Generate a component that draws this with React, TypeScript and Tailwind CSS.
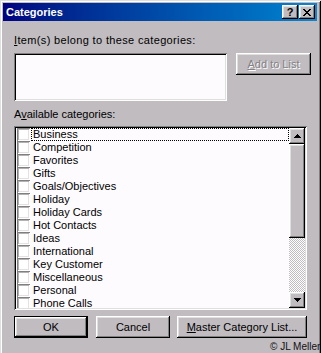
import React from 'react';

const categories = [
  'Business',
  'Competition',
  'Favorites',
  'Gifts',
  'Goals/Objectives',
  'Holiday',
  'Holiday Cards',
  'Hot Contacts',
  'Ideas',
  'International',
  'Key Customer',
  'Miscellaneous',
  'Personal',
  'Phone Calls',
];

const styles = {
  raised: 'shadow-[inset_-1px_-1px_#000,inset_1px_1px_#fff,inset_-2px_-2px_#808080,inset_2px_2px_#dfdfdf]',
  sunken: 'shadow-[inset_1px_1px_#808080,inset_-1px_-1px_#fff,inset_2px_2px_#000,inset_-2px_-2px_#dfdfdf]',
  check: 'shadow-[inset_1px_1px_#808080,inset_-1px_-1px_#fff,inset_2px_2px_#b4b0b4,inset_-2px_-2px_#e4e0e4]',
  button: 'flex h-[22px] items-center justify-center bg-[#c0bcc0] text-[11px]',
};

function Arrow({ down }: { down?: boolean }) {
  return (
    <svg width="7" height="4" viewBox="0 0 7 4" className={down ? 'rotate-180' : ''}>
      <path d="M3 0h1v1h1v1h1v1h1v1H0V3h1V2h1V1h1z" fill="#000" />
    </svg>
  );
}

function App() {
  return (
    <div className="relative h-[353px] w-[321px] overflow-hidden bg-[#c0bcc0] font-['Liberation_Sans',Arial,sans-serif]">
      <div className="h-[360px] w-[321px] pl-[3px] pr-[4px] pt-[3px] shadow-[inset_1px_1px_#dfdfdf,inset_-1px_-1px_#000,inset_2px_2px_#fff,inset_-2px_-2px_#808080]">
        {/* title bar */}
        <div className="flex h-[18px] items-center bg-linear-to-r from-[#000080] to-[#1084d0] pl-[3px] pr-[2px]">
          <span className="text-[11px] font-bold leading-[13px] text-white">Categories</span>
          <div className="ml-auto flex gap-[1px]">
            <div className={`${styles.raised} flex h-[14px] w-[16px] items-center justify-center bg-[#c0bcc0] text-[11px] font-bold leading-none text-black`}>
              ?
            </div>
            <div className={`${styles.raised} flex h-[14px] w-[16px] items-center justify-center bg-[#c0bcc0]`}>
              <svg width="8" height="7" viewBox="0 0 8 7">
                <path d="M0 0h2v1h1v1h2V1h1V0h2v1H7v1H6v1H5v1h1v1h1v1h1v1H6V6H5V5H3v1H2v1H0V6h1V5h1V4h1V3H2V2H1V1H0z" fill="#000" />
              </svg>
            </div>
          </div>
        </div>

        <div className="pl-[11px] pr-[6px] text-[11px] leading-[13px] text-black">
          <div className="mt-[13px] tracking-[0.35px]">
            <u>I</u>tem(s) belong to these categories:
          </div>

          <div className="mt-[6px] flex items-start">
            <div className={`${styles.sunken} h-[48px] w-[213px] bg-[#fefbfe]`} />
            <div className={`${styles.raised} ${styles.button} ml-auto w-[75px] text-[#858185] [text-shadow:1px_1px_0_#fff]`}>
              <span><u>A</u>dd to List</span>
            </div>
          </div>

          <div className="mt-[7px]">
            A<u>v</u>ailable categories:
          </div>

          <div className={`${styles.sunken} mt-[5px] flex h-[184px] w-[293px] bg-[#fefbfe] p-[2px]`}>
            <div className="flex-1 overflow-hidden">
              {categories.map((name, i) => (
                <div key={name} className="flex h-[13px] items-center">
                  <div className={`${styles.check} ml-px h-[13px] w-[13px] shrink-0 bg-white`} />
                  <div
                    className={`ml-px flex h-[13px] flex-1 items-center border pl-px ${
                      i === 0 ? 'border-dotted border-black' : 'border-transparent'
                    }`}
                  >
                    {name}
                  </div>
                </div>
              ))}
            </div>

            {/* scrollbar */}
            <div className="flex w-[16px] flex-col">
              <div className={`${styles.raised} flex h-[16px] items-center justify-center bg-[#c0bcc0]`}>
                <Arrow />
              </div>
              <div className={`${styles.raised} h-[94px] bg-[#c0bcc0]`} />
              <div className="flex-1 bg-[repeating-conic-gradient(#c0bcc0_0_25%,#fff_0_50%)] bg-[length:2px_2px]" />
              <div className={`${styles.raised} flex h-[16px] items-center justify-center bg-[#c0bcc0]`}>
                <Arrow down />
              </div>
            </div>
          </div>

          <div className="mt-[6px] flex text-black">
            <div className={`${styles.raised} ${styles.button} w-[74px] border border-black`}>OK</div>
            <div className={`${styles.raised} ${styles.button} ml-[8px] w-[74px]`}>Cancel</div>
            <div className={`${styles.raised} ${styles.button} ml-[7px] w-[130px]`}>
              <span><u>M</u>aster Category List...</span>
            </div>
          </div>
        </div>
      </div>

      <div className="absolute left-[270px] top-[341px] whitespace-nowrap text-[10px] leading-[12px] text-[#111]">
        © JL Meller
      </div>
    </div>
  );
}

export default App;
